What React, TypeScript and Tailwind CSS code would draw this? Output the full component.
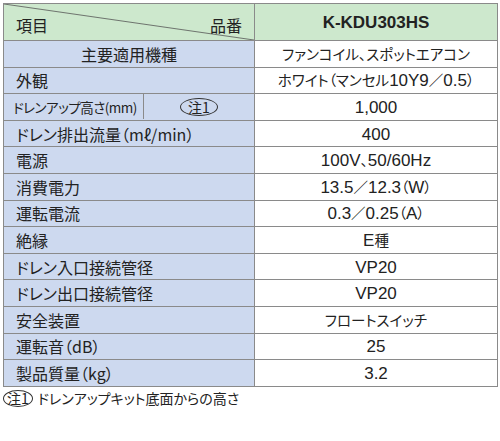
import React from "react";

const rows: [string, string][] = [
  ["外観", "ホワイト（マンセル10Y9／0.5）"],
  ["__drain", "1,000"],
  ["ドレン排出流量（mℓ/min）", "400"],
  ["電源", "100V、50/60Hz"],
  ["消費電力", "13.5／12.3（W）"],
  ["運転電流", "0.3／0.25（A）"],
  ["絶縁", "E種"],
  ["ドレン入口接続管径", "VP20"],
  ["ドレン出口接続管径", "VP20"],
  ["安全装置", "フロートスイッチ"],
  ["運転音（dB）", "25"],
  ["製品質量（kg）", "3.2"],
];

// latin runs in a bigger sans, japanese runs a bit smaller
const Value = ({ text }: { text: string }) => (
  <>
    {text.split(/([\x20-\x7E]+)/).map((part, i) =>
      /^[\x20-\x7E]+$/.test(part) ? (
        <span key={i} className="text-[17px]" style={{ fontFamily: '"Liberation Sans", Arial, sans-serif' }}>
          {part}
        </span>
      ) : (
        <span key={i} className="text-[14.5px]">
          {part}
        </span>
      )
    )}
  </>
);

const Note = ({ big }: { big?: boolean }) => (
  <span
    className={`inline-flex items-center justify-center rounded-[50%] border border-[#333] leading-none ${
      big ? "h-[18px] px-[7px] text-[14px]" : "h-[17px] px-[3px] text-[14px]"
    }`}
  >
    注1
  </span>
);

const cell = "border border-[#8a8a8a] p-0";

export default function App() {
  return (
    <div
      className="w-[500px] h-[441px] bg-white text-[#222] pt-[3px] pl-[3px] [font-feature-settings:'palt']"
      style={{ fontFamily: '"Noto Sans CJK JP", "Liberation Sans", sans-serif' }}
    >
      <table className="w-[494px] border-collapse border border-[#666] text-[16px] table-fixed">
        <colgroup>
          <col className="w-[251px]" />
          <col className="w-[243px]" />
        </colgroup>
        <tbody>
          <tr className="h-[37px] bg-[#cde8cd]">
            <td className={`relative ${cell}`}>
              <svg className="absolute inset-0 w-full h-full" preserveAspectRatio="none" viewBox="0 0 100 100">
                <line x1="0" y1="0" x2="100" y2="100" stroke="#555" strokeWidth="0.8" vectorEffect="non-scaling-stroke" />
              </svg>
              <div className="relative flex justify-between items-end px-[12px] pt-[5px] leading-[26px]">
                <span>項目</span>
                <span>品番</span>
              </div>
            </td>
            <td
              className={`${cell} text-center font-bold text-[17px] leading-none`}
              style={{ fontFamily: '"Liberation Sans", Arial, sans-serif' }}
            >
              K-KDU303HS
            </td>
          </tr>
          <tr className="h-[26.6px]">
            <td className={`${cell} bg-[#cdd9ef] text-center leading-[22px]`}>主要適用機種</td>
            <td className={`${cell} text-center leading-[22px]`}>
              <Value text="ファンコイル、スポットエアコン" />
            </td>
          </tr>
          {rows.map(([label, value]) => (
            <tr key={label} className="h-[26.6px]">
              {label === "__drain" ? (
                <td className={`${cell} bg-[#cdd9ef]`}>
                  <div className="flex h-[25px] items-center">
                    <span className="w-[140px] shrink-0 pl-[9px] whitespace-nowrap text-[13.5px] tracking-[-0.5px] border-r border-[#8a8a8a] h-full flex items-center">
                      ドレンアップ高さ(mm)
                    </span>
                    <span className="flex-1 flex justify-center">
                      <Note big />
                    </span>
                  </div>
                </td>
              ) : (
                <td className={`${cell} bg-[#cdd9ef] pl-[12px] whitespace-nowrap leading-[22px]`}>{label}</td>
              )}
              <td className={`${cell} text-center whitespace-nowrap leading-[22px]`}>
                <Value text={value} />
              </td>
            </tr>
          ))}
        </tbody>
      </table>
      <div className="mt-[1px] flex items-center gap-[5px] text-[14px]">
        <Note />
        <span>ドレンアップキット底面からの高さ</span>
      </div>
    </div>
  );
}
